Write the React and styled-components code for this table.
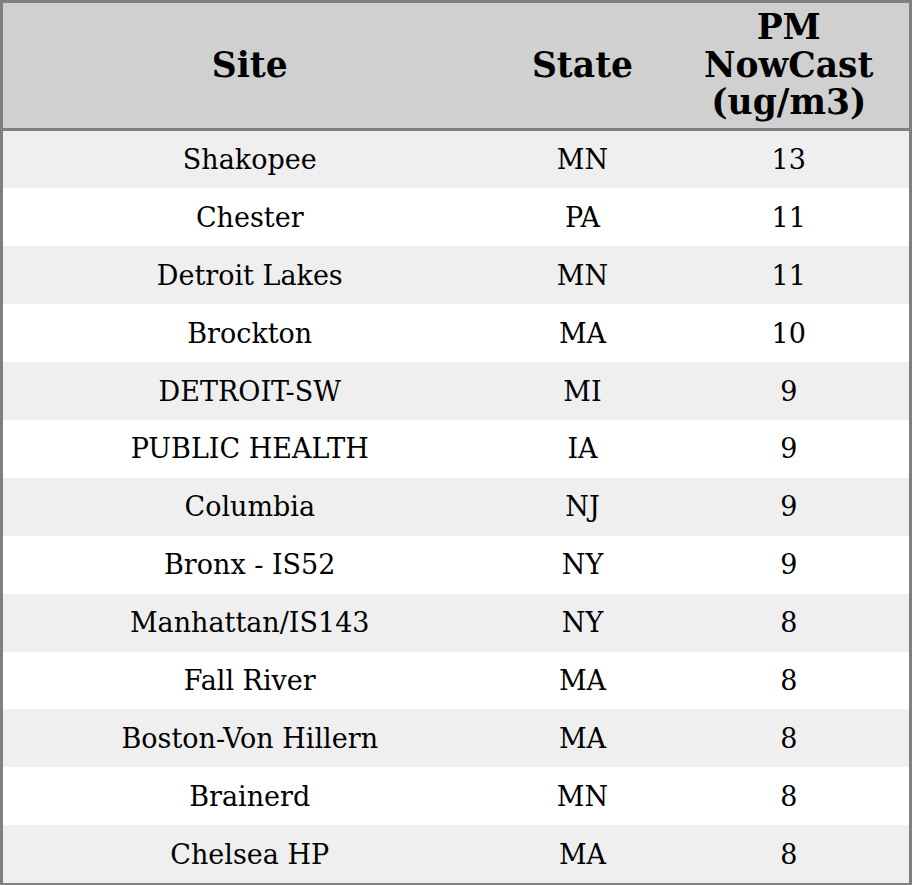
import React from 'react';
import styled, { createGlobalStyle } from 'styled-components';

const rows = [
  ['Shakopee', 'MN', 13],
  ['Chester', 'PA', 11],
  ['Detroit Lakes', 'MN', 11],
  ['Brockton', 'MA', 10],
  ['DETROIT-SW', 'MI', 9],
  ['PUBLIC HEALTH', 'IA', 9],
  ['Columbia', 'NJ', 9],
  ['Bronx - IS52', 'NY', 9],
  ['Manhattan/IS143', 'NY', 8],
  ['Fall River', 'MA', 8],
  ['Boston-Von Hillern', 'MA', 8],
  ['Brainerd', 'MN', 8],
  ['Chelsea HP', 'MA', 8],
];

const GlobalStyle = createGlobalStyle`
  body {
    margin: 0;
    background: #ffffff;
    font-family: "DejaVu Serif", "Liberation Serif", serif;
  }
`;

const Table = styled.table`
  width: 912px;
  table-layout: fixed;
  border-collapse: collapse;
  border: 3px solid #808080;
  color: #000;
`;

const HeadRow = styled.tr`
  background: #d0d0d0;
  border-bottom: 3px solid #808080;
`;

const HeadCell = styled.th`
  padding: 6px 0;
  font-size: 34.5px;
  font-weight: bold;
  line-height: 37.5px;
  text-align: center;
`;

const BodyRow = styled.tr`
  background: ${props => (props.odd ? '#efefef' : '#ffffff')};
`;

const Cell = styled.td`
  height: 57.9px;
  padding: 0;
  font-size: 27px;
  text-align: center;
  vertical-align: middle;
`;

export default function App () {
  return (
    <>
      <GlobalStyle />
      <Table>
        <colgroup>
          <col style={{ width: 495 }} />
          <col style={{ width: 172 }} />
          <col style={{ width: 242 }} />
        </colgroup>
        <thead>
          <HeadRow>
            <HeadCell>Site</HeadCell>
            <HeadCell>State</HeadCell>
            <HeadCell>PM<br />NowCast<br />(ug/m3)</HeadCell>
          </HeadRow>
        </thead>
        <tbody>
          {rows.map((r, i) => (
            <BodyRow key={r[0]} odd={i % 2 === 0}>
              <Cell>{r[0]}</Cell>
              <Cell>{r[1]}</Cell>
              <Cell>{r[2]}</Cell>
            </BodyRow>
          ))}
        </tbody>
      </Table>
    </>
  );
}
